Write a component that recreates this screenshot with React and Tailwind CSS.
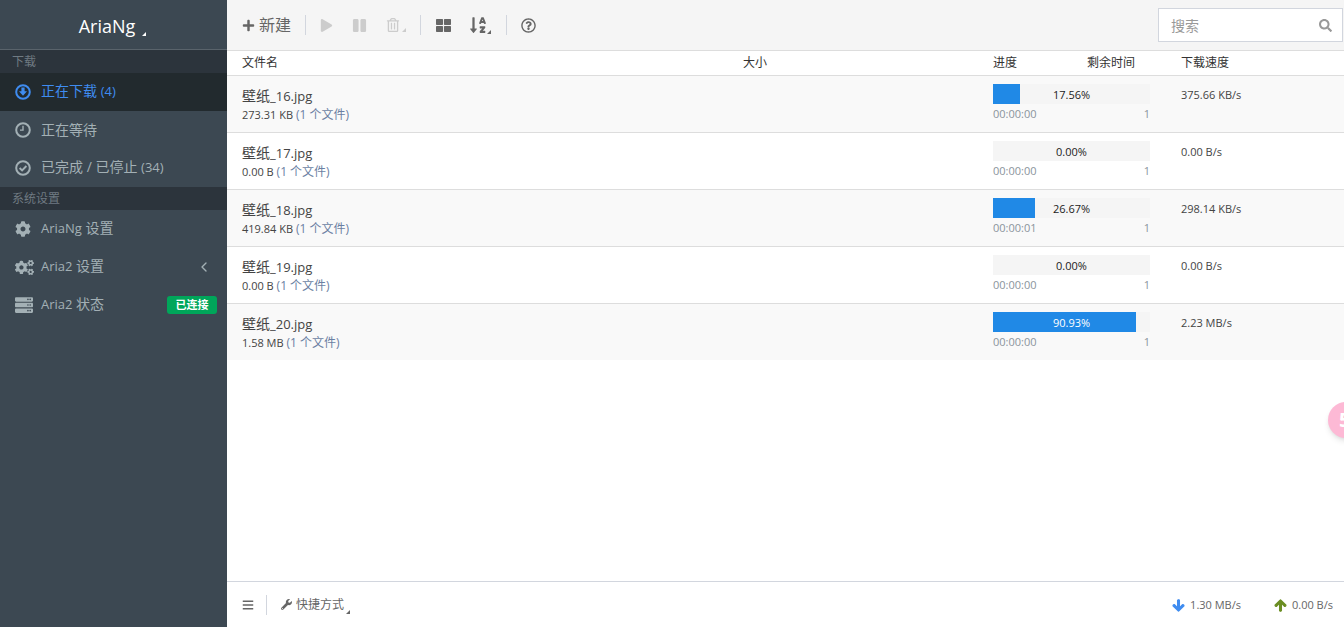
import React from 'react';
import {
  FaPlus,
  FaPlay,
  FaPause,
  FaRegTrashAlt,
  FaThLarge,
  FaSortAlphaDown,
  FaRegQuestionCircle,
  FaSearch,
  FaBars,
  FaWrench,
  FaArrowDown,
  FaArrowUp,
  FaCog,
  FaCogs,
  FaServer,
} from 'react-icons/fa';
import { ChevronLeft } from 'lucide-react';

const FONT = "font-['Open_Sans','Noto_Sans_CJK_SC',sans-serif]";

const tasks = [
  { name: '_16.jpg', size: '273.31 KB', pct: 17.56, width: 17, time: '00:00:00', speed: '375.66 KB/s' },
  { name: '_17.jpg', size: '0.00 B', pct: 0, width: 0, time: '00:00:00', speed: '0.00 B/s' },
  { name: '_18.jpg', size: '419.84 KB', pct: 26.67, width: 26.67, time: '00:00:01', speed: '298.14 KB/s' },
  { name: '_19.jpg', size: '0.00 B', pct: 0, width: 0, time: '00:00:00', speed: '0.00 B/s' },
  { name: '_20.jpg', size: '1.58 MB', pct: 90.93, width: 90.93, time: '00:00:00', speed: '2.23 MB/s' },
];

function Caret({ className }) {
  return (
    <span className={`absolute w-0 h-0 border-l-[4px] border-l-transparent border-b-[4px] ${className}`} />
  );
}

function CircleDown() {
  return (
    <svg width="16" height="16" viewBox="0 0 16 16">
      <circle cx="8" cy="8" r="6.8" fill="none" stroke="currentColor" strokeWidth="2" />
      <path d="M6.4 3.6h3.2v3.6h2.4L8 11.8 4 7.2h2.4z" fill="currentColor" />
    </svg>
  );
}

function CircleClock() {
  return (
    <svg width="16" height="16" viewBox="0 0 16 16">
      <circle cx="8" cy="8" r="6.8" fill="none" stroke="currentColor" strokeWidth="2" />
      <path d="M8.7 3.8v5H5v-1.4h2.3V3.8z" fill="currentColor" />
    </svg>
  );
}

function CircleCheck() {
  return (
    <svg width="16" height="16" viewBox="0 0 16 16">
      <circle cx="8" cy="8" r="6.8" fill="none" stroke="currentColor" strokeWidth="2" />
      <path d="M4.6 8l2.5 2.4 4.3-4.4" fill="none" stroke="currentColor" strokeWidth="1.9" />
    </svg>
  );
}

function SectionHeader({ children }) {
  return (
    <div className="h-[23px] bg-[#2c343c] pl-[12px] text-[12px] leading-[23px] text-[#6f7a82]">{children}</div>
  );
}

function Latin({ children }) {
  return <span className="text-[13px]">{children}</span>;
}

function MenuItem({ icon, children, active, right }) {
  return (
    <div
      className={`h-[38px] flex items-center pl-[15px] pr-[10px] text-[14px] ${
        active ? 'bg-[#222a2e] text-[#3f8cf0]' : 'text-[#a3b0b5]'
      }`}
    >
      <span className="w-[26px] flex items-center text-[16px]">{icon}</span>
      <span className="flex-1 pb-[2px]">{children}</span>
      {right}
    </div>
  );
}

function Sidebar() {
  return (
    <aside className="w-[227px] shrink-0 bg-[#3c4852]">
      <div className="h-[50px] pt-[3px] border-b border-[#59636b] flex items-center justify-center">
        <span className="relative text-[18px] text-white pr-[11px] mr-[2px]">
          AriaNg
          <Caret className="right-[0px] bottom-[4px] border-b-white" />
        </span>
      </div>
      <SectionHeader>下载</SectionHeader>
      <MenuItem icon={<CircleDown />} active>
        正在下载 <Latin>(4)</Latin>
      </MenuItem>
      <MenuItem icon={<CircleClock />}>正在等待</MenuItem>
      <MenuItem icon={<CircleCheck />}>
        已完成 / 已停止 <Latin>(34)</Latin>
      </MenuItem>
      <SectionHeader>系统设置</SectionHeader>
      <MenuItem icon={<FaCog />}>
        <Latin>AriaNg</Latin> 设置
      </MenuItem>
      <MenuItem
        icon={<FaCogs className="text-[19px]" />}
        right={<ChevronLeft size={16} strokeWidth={2} className="mr-[5px]" />}
      >
        <Latin>Aria2</Latin> 设置
      </MenuItem>
      <MenuItem
        icon={<FaServer className="text-[18px]" />}
        right={
          <span className="h-[18px] w-[50px] rounded-[3px] bg-[#00a65a] text-white text-[11px] font-bold leading-[18px] text-center">
            已连接
          </span>
        }
      >
        <Latin>Aria2</Latin> 状态
      </MenuItem>
    </aside>
  );
}

function Divider() {
  return <span className="w-px h-[20px] bg-[#d2d6de]" />;
}

function Toolbar() {
  return (
    <header className="h-[51px] shrink-0 bg-[#f5f5f5] border-b border-[#dddddd] flex items-center pl-[15px] pr-[1px] text-[#666666]">
      <FaPlus className="text-[13px] mr-[4px]" />
      <span className="text-[16px] mr-[14px]">新建</span>
      <Divider />
      <FaPlay className="ml-[14px] text-[13px] text-[#cccccc]" />
      <FaPause className="ml-[19px] text-[15px] text-[#cccccc]" />
      <span className="relative ml-[19px] mr-[20px]">
        <FaRegTrashAlt className="text-[14px] text-[#cccccc]" />
        <Caret className="-right-[6px] bottom-0 border-b-[#cccccc]" />
      </span>
      <Divider />
      <FaThLarge className="ml-[15px] text-[15px]" />
      <span className="relative ml-[18px] mr-[19px]">
        <FaSortAlphaDown className="text-[18px]" />
        <Caret className="-right-[4px] bottom-0 border-b-[#666666]" />
      </span>
      <Divider />
      <FaRegQuestionCircle className="ml-[14px] text-[15px]" />
      <div className="ml-auto w-[185px] h-[34px] bg-white border border-[#d2d6de] flex items-center pl-[12px] pr-[10px]">
        <span className="flex-1 text-[14px] text-[#999999]">搜索</span>
        <FaSearch className="text-[13px] text-[#999999]" />
      </div>
    </header>
  );
}

function TableHeader() {
  return (
    <div className="h-[25px] shrink-0 border-b border-[#dddddd] flex items-center pl-[15px] text-[12px] text-[#333333]">
      <span className="w-[501px]">文件名</span>
      <span className="w-[250px]">大小</span>
      <span className="w-[94px]">进度</span>
      <span className="w-[94px]">剩余时间</span>
      <span>下载速度</span>
    </div>
  );
}

function TaskRow({ task, odd }) {
  const filled = task.pct > 50;
  return (
    <div
      className={`h-[57px] last:h-[56px] border-b border-[#dddddd] last:border-b-0 flex pl-[15px] ${
        odd ? 'bg-[#f9f9f9]' : 'bg-white'
      }`}
    >
      <div className="w-[751px] pt-[11px]">
        <div className="text-[14px] leading-[18px] text-[#444444]">
          壁纸<Latin>{task.name}</Latin>
        </div>
        <div className="text-[11px] leading-[18px] mt-[1px] text-[#444444]">
          {task.size} <span className="text-[12px] text-[#6b7fa3]">(1 个文件)</span>
        </div>
      </div>
      <div className="w-[157px] pt-[8px]">
        <div className="relative h-[20px] bg-[#f5f5f5]">
          <div className="h-full bg-[#2089e6]" style={{ width: `${task.width}%` }} />
          <span
            className={`absolute inset-0 text-center text-[11px] leading-[21px] ${
              filled ? 'text-white' : 'text-[#222222]'
            }`}
          >
            {task.pct.toFixed(2)}%
          </span>
        </div>
        <div className="flex justify-between text-[11px] leading-[18px] mt-[1px] text-[#8a949c]">
          <span>{task.time}</span>
          <span>1</span>
        </div>
      </div>
      <div className="ml-[31px] pt-[9px] text-[11px] leading-[20px] text-[#444444]">{task.speed}</div>
    </div>
  );
}

function Footer() {
  return (
    <footer className="h-[46px] shrink-0 border-t border-[#d2d6de] flex items-center pl-[15px] pr-[11px] text-[11px] text-[#666666]">
      <FaBars className="text-[12px] mr-[12px]" />
      <Divider />
      <span className="relative flex items-center ml-[14px] pr-[6px] text-[12px]">
        <FaWrench className="text-[11px] mr-[4px]" />
        快捷方式
        <Caret className="right-0 bottom-0 border-b-[#666666]" />
      </span>
      <span className="ml-auto flex items-center leading-[18px] pt-[1px]">
        <FaArrowDown strokeWidth={40} stroke="currentColor" className="text-[13px] text-[#3f8cf0] mr-[5px]" />
        1.30 MB/s
      </span>
      <span className="ml-[33px] flex items-center leading-[18px] pt-[1px]">
        <FaArrowUp strokeWidth={40} stroke="currentColor" className="text-[13px] text-[#6b8e23] mr-[5px]" />
        0.00 B/s
      </span>
    </footer>
  );
}

export default function App() {
  return (
    <div className={`relative flex h-[627px] w-[1344px] overflow-hidden bg-white ${FONT}`}>
      <Sidebar />
      <main className="flex-1 flex flex-col min-w-0">
        <Toolbar />
        <TableHeader />
        <div className="flex-1">
          {tasks.map((task, i) => (
            <TaskRow key={task.name} task={task} odd={i % 2 === 0} />
          ))}
        </div>
        <Footer />
      </main>
      {/* floating pink widget, cut off by the window edge */}
      <div className="absolute left-[1328px] top-[402px] w-[36px] h-[36px] rounded-full bg-[#fdb9d5] shadow-md pl-[11px] text-[20px] font-bold leading-[36px] text-white">
        5
      </div>
    </div>
  );
}
